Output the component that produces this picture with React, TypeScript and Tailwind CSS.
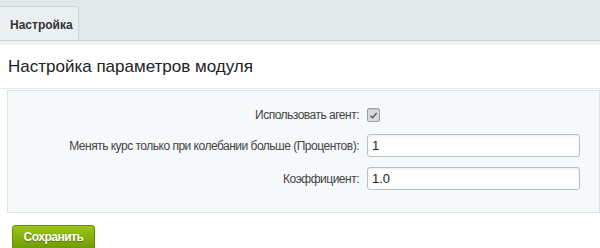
const ROWS = [
  { label: "Менять курс только при колебании больше (Процентов):", value: "1" },
  { label: "Коэффициент:", value: "1.0" },
];

export default function App() {
  return (
    <div className="h-[248px] w-[600px] overflow-hidden bg-white font-['Liberation_Sans',Arial,sans-serif]">
      {/* Вкладки */}
      <div className="flex h-[41px] items-end border-b border-[#c9d2d5] bg-[#e1e9eb]">
        <div className="flex h-[34px] w-[79px] items-center rounded-tr-[3px] border-r border-t border-[#cdd6d9] bg-[#eaf0f1] pl-[10px] pt-[3px] text-[12px] font-bold text-[#333]">
          Настройка
        </div>
      </div>
      <div className="h-[4px] bg-[#eef2f3]" />

      {/* Заголовок */}
      <div className="flex h-[44px] items-center border-b border-[#e4eaec] px-[8px] text-[17px] text-[#222]">
        Настройка параметров модуля
      </div>

      {/* Форма */}
      <div className="ml-[7px] mt-[1px] flex h-[123px] flex-col gap-[10px] border border-[#dbe3e6] bg-[#f5f9fa] pt-[15px]">
        <div className="flex items-center">
          <div className="w-[359px] pr-[8px] text-right text-[12px] tracking-[-0.5px] text-[#444]">Использовать агент:</div>
          <div className="flex h-[14px] w-[13px] items-center justify-center rounded-[2px] border border-[#9aa2a5] bg-[#d5dadc] shadow-[inset_0_1px_1px_rgba(0,0,0,0.1)]">
            <svg viewBox="0 0 10 10" className="h-[9px] w-[9px]">
              <path d="M1.5 5.2 L4 7.5 L8.5 2.2" fill="none" stroke="#555" strokeWidth="1.4" />
            </svg>
          </div>
        </div>
        {ROWS.map((r) => (
          <div key={r.label} className="flex items-center">
            <div className="w-[359px] pr-[8px] text-right text-[12px] tracking-[-0.5px] text-[#444]">{r.label}</div>
            <input
              defaultValue={r.value}
              className="h-[23px] w-[213px] rounded-[3px] border border-[#b8c0c3] bg-white px-[4px] text-[13px] text-[#222] shadow-[inset_0_1px_2px_rgba(0,0,0,0.08)] outline-none"
            />
          </div>
        ))}
      </div>

      {/* Кнопка */}
      <div className="pl-[12px] pt-[11px]">
        <button
          type="button"
          className="h-[25px] w-[83px] rounded-[3px] border border-[#5f8c00] bg-gradient-to-b from-[#9cc51a] to-[#6d9c00] text-[12px] font-bold tracking-[-0.5px] text-white [text-shadow:0_1px_1px_rgba(0,0,0,0.35)]"
        >
          Сохранить
        </button>
      </div>
    </div>
  );
}
